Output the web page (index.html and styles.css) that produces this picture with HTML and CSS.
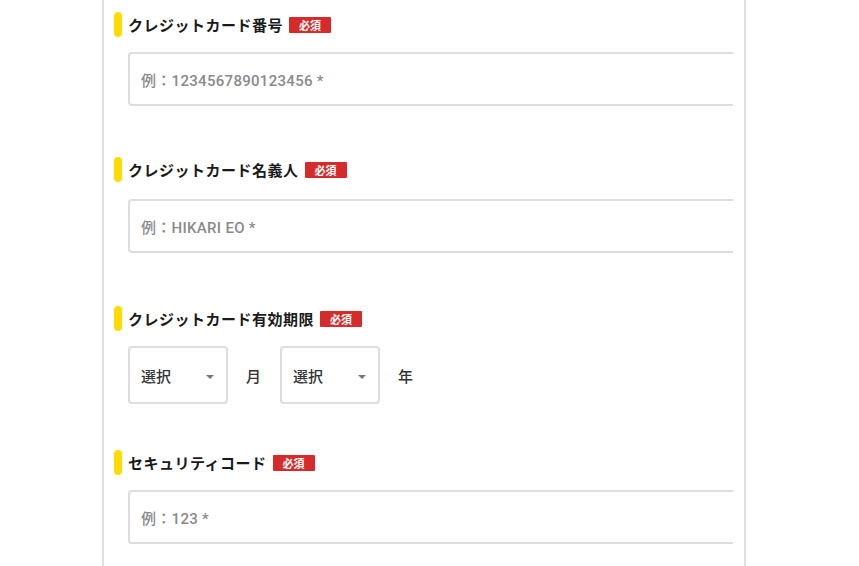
FILE: index.html
```html
<!DOCTYPE html>
<html lang="ja">
<head>
<meta charset="utf-8">
<title>クレジットカード情報</title>
<link rel="stylesheet" href="styles.css">
</head>
<body>
<div class="panel">
  <div class="field field-1">
    <div class="label"><span class="bar"></span><span class="label-text">クレジットカード番号</span><span class="badge">必須</span></div>
    <div class="input-clip"><div class="input">例：1234567890123456 *</div></div>
  </div>
  <div class="field field-2">
    <div class="label"><span class="bar"></span><span class="label-text">クレジットカード名義人</span><span class="badge">必須</span></div>
    <div class="input-clip"><div class="input">例：HIKARI EO *</div></div>
  </div>
  <div class="field field-3">
    <div class="label"><span class="bar"></span><span class="label-text">クレジットカード有効期限</span><span class="badge">必須</span></div>
    <div class="selects">
      <div class="select"><span>選択</span><span class="arrow"></span></div>
      <span class="unit">月</span>
      <div class="select"><span>選択</span><span class="arrow"></span></div>
      <span class="unit">年</span>
    </div>
  </div>
  <div class="field field-4">
    <div class="label"><span class="bar"></span><span class="label-text">セキュリティコード</span><span class="badge">必須</span></div>
    <div class="input-clip"><div class="input">例：123 *</div></div>
  </div>
</div>
</body>
</html>
```

FILE: styles.css
```css
html, body {
  margin: 0;
  padding: 0;
  background: #ffffff;
  height: 100%;
  overflow: hidden;
}
body {
  font-family: Roboto, "Noto Sans CJK JP", sans-serif;
  color: #222;
}
.panel {
  margin-left: 102px;
  width: 644px;
  height: 566px;
  box-sizing: border-box;
  overflow: hidden;
  border-left: 2px solid #dedede;
  border-right: 2px solid #dedede;
  padding-top: 12px;
}
.label {
  display: flex;
  align-items: center;
  height: 25px;
}
.bar {
  width: 8px;
  height: 25px;
  border-radius: 4px;
  background: #ffdc00;
  margin-left: 10px;
  margin-right: 6px;
  flex: none;
}
.label-text {
  font-family: "Noto Sans CJK JP", sans-serif;
  font-weight: 700;
  font-size: 15px;
  letter-spacing: 0.5px;
  color: #1a1a1a;
}
.badge {
  margin-left: 6px;
  background: #d52b2b;
  color: #fff;
  font-family: "Noto Sans CJK JP", sans-serif;
  font-size: 11px;
  font-weight: 700;
  line-height: 16px;
  height: 16px;
  padding: 0 10px;
  border-radius: 1px;
}
.input-clip {
  margin-left: 24px;
  width: 605px;
  overflow: hidden;
}
.input {
  width: 640px;
  height: 54px;
  box-sizing: border-box;
  border: 2px solid #dddddd;
  border-radius: 4px;
  display: flex;
  align-items: center;
  padding-left: 11px;
  font-size: 15px;
  font-weight: 500;
  letter-spacing: 0.3px;
  color: #8a8a8a;
}
.field-1 .label { margin-bottom: 15px; }
.field-1 { margin-bottom: 51px; }
.field-2 .label { margin-bottom: 17px; }
.field-2 { margin-bottom: 53px; }
.field-3 .label { margin-bottom: 15px; }
.field-3 { margin-bottom: 46px; }
.field-4 .label { margin-bottom: 15px; }
.selects {
  display: flex;
  align-items: center;
  margin-left: 24px;
}
.select {
  width: 100px;
  height: 58px;
  box-sizing: border-box;
  border: 2px solid #dddddd;
  border-radius: 4px;
  display: flex;
  align-items: center;
  justify-content: space-between;
  padding: 0 12px 0 11px;
  font-family: "Noto Sans CJK JP", sans-serif;
  font-size: 15px;
  font-weight: 500;
  color: #333;
}
.arrow {
  width: 0;
  height: 0;
  border-left: 4px solid transparent;
  border-right: 4px solid transparent;
  border-top: 4px solid #777;
  margin-top: 3px;
}
.unit {
  font-family: "Noto Sans CJK JP", sans-serif;
  font-size: 15px;
  font-weight: 500;
  color: #333;
  margin: 0 19px 0 18px;
}
```
